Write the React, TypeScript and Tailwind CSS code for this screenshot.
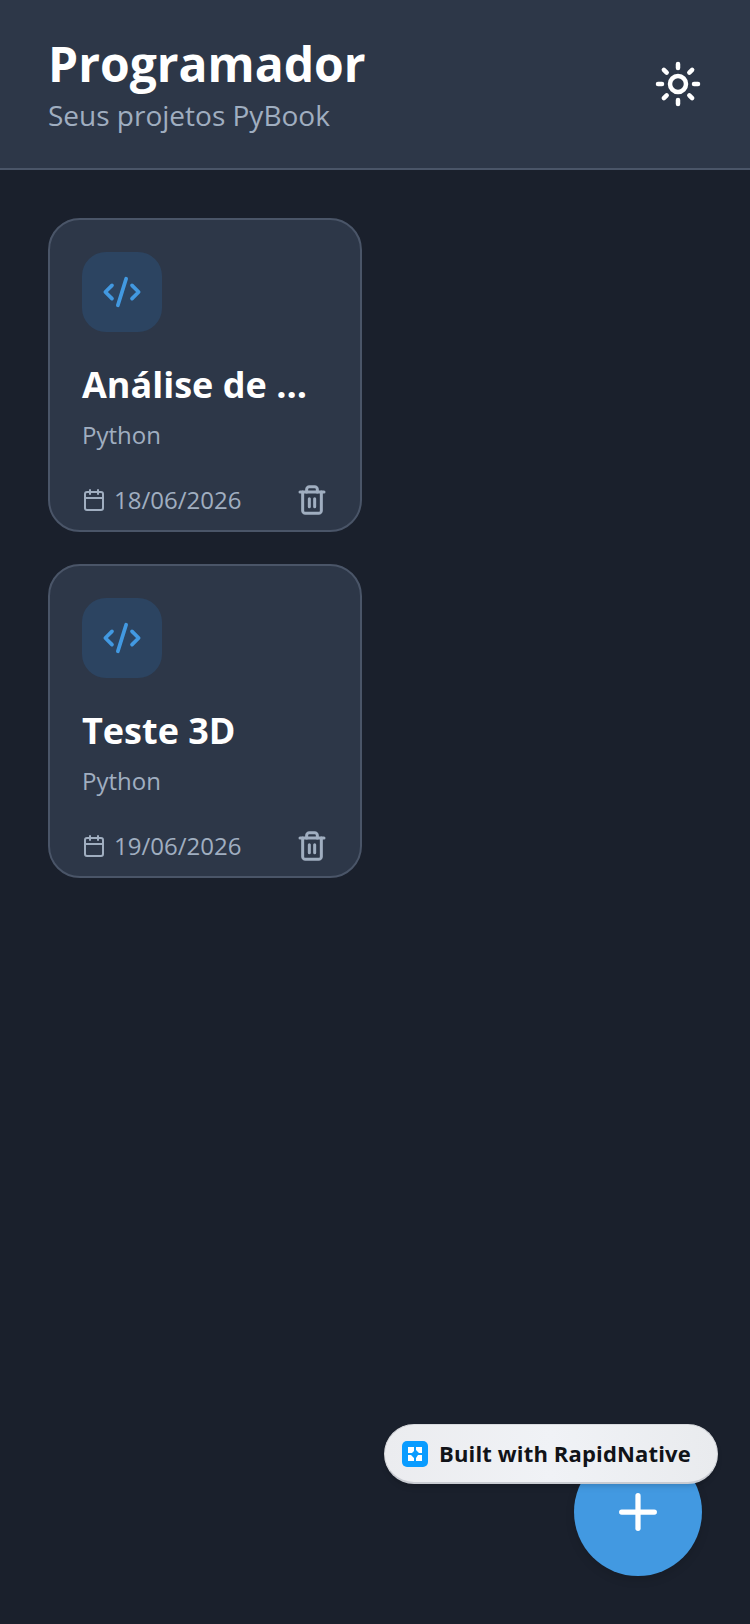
import { Sun, CodeXml, Calendar, Trash2, Plus } from "lucide-react";

const font = "[font-family:'Open_Sans','Noto_Sans',sans-serif]";

function Card({ title, date }: { title: string; date: string }) {
  return (
    <div className="w-[314px] h-[314px] rounded-[32px] border-2 border-[#4a5568] bg-[#2d3748] pt-[32px] px-[32px] pb-[14px] flex flex-col">
      <div className="w-[80px] h-[80px] rounded-[24px] bg-[#2c4461] flex items-center justify-center">
        <CodeXml size={40} strokeWidth={2.2} className="text-[#4299e1]" />
      </div>
      <div className="mt-[28px] text-[36px] leading-[50px] font-bold text-white whitespace-nowrap">{title}</div>
      <div className="mt-[7px] text-[24px] leading-[36px] text-[#a0aec0]">Python</div>
      <div className="mt-auto flex items-center justify-between">
        <div className="flex items-center gap-[8px]">
          <Calendar size={24} strokeWidth={2} className="text-[#a0aec0]" />
          <span className="text-[24px] leading-[32px] text-[#a0aec0]">{date}</span>
        </div>
        <Trash2 size={32} strokeWidth={2.25} className="text-[#a0aec0]" />
      </div>
    </div>
  );
}

export default function App() {
  return (
    <div className={`relative w-[750px] h-[1624px] overflow-hidden bg-[#1a202c] ${font}`}>
      <header className="h-[170px] border-b-2 border-[#4a5568] bg-[#2d3748] px-[48px] flex items-center justify-between">
        <div className="flex flex-col gap-[2px]">
          <div className="text-[48px] leading-[60px] font-bold text-white">Programador</div>
          <div className="text-[28px] leading-[38px] text-[#a0aec0]">Seus projetos PyBook</div>
        </div>
        <Sun size={48} strokeWidth={2.25} className="text-white" />
      </header>
      <main className="px-[48px] pt-[48px] flex flex-col gap-[32px]">
        <Card title="Análise de …" date="18/06/2026" />
        <Card title="Teste 3D" date="19/06/2026" />
      </main>
      <div className="absolute right-[48px] bottom-[48px] w-[128px] h-[128px] rounded-full bg-[#4299e1] flex items-center justify-center shadow-[0_4px_10px_rgba(0,0,0,0.12)]">
        <Plus size={56} strokeWidth={2.25} className="text-white" />
      </div>
      <div className="absolute left-[384px] top-[1424px] w-[334px] h-[60px] rounded-[30px] bg-gradient-to-r from-[#ebecef] via-[#f0f2f6] to-[#e9ebee] border border-[#d8dade] border-b-2 border-b-[#c9ccd2] shadow-md flex items-center pl-[17px] gap-[11px]">
        <svg width="26" height="26" viewBox="0 0 26 26">
          <rect width="26" height="26" rx="5" fill="#0a9cff" />
          <path d="M6 6h6v4l-2 2H6zM14 6h6v6h-3l-3-3zM6 14h3l3 3v3H6zM20 20h-6v-3l2-3h4z" fill="#fff" />
        </svg>
        <span className="text-[22px] tracking-[0.15px] leading-[31px] font-bold text-[#111318] whitespace-nowrap">Built with RapidNative</span>
      </div>
    </div>
  );
}
